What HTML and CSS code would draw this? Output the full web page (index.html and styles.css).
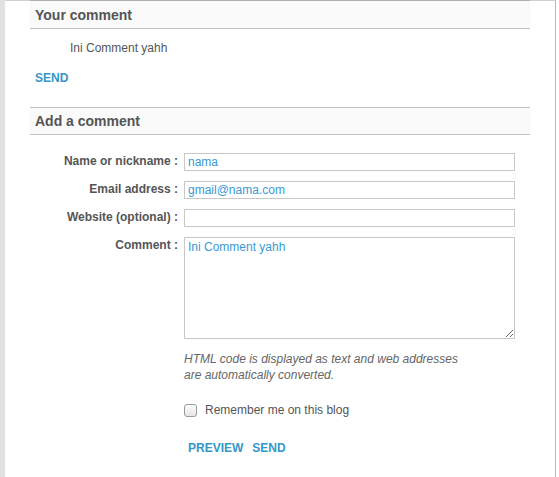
FILE: index.html
```html
<!DOCTYPE html>
<html>
<head>
<meta charset="utf-8">
<link rel="stylesheet" href="styles.css">
</head>
<body>
<div class="page">
  <div class="strip"></div>
  <div class="main">
    <div class="section-head first">Your comment</div>
    <p class="preview-text">Ini Comment yahh</p>
    <div class="actions single"><a class="link">SEND</a></div>

    <div class="section-head">Add a comment</div>
    <form class="form">
      <div class="row">
        <label class="label">Name or nickname :</label>
        <input class="field" type="text" value="nama">
      </div>
      <div class="row">
        <label class="label">Email address :</label>
        <input class="field" type="text" value="gmail@nama.com">
      </div>
      <div class="row">
        <label class="label">Website (optional) :</label>
        <input class="field" type="text" value="">
      </div>
      <div class="row">
        <label class="label">Comment :</label>
        <textarea class="field area">Ini Comment yahh</textarea>
      </div>
      <div class="row">
        <span class="label"></span>
        <div class="col">
          <p class="help">HTML code is displayed as text and web addresses<br>are automatically converted.</p>
          <label class="remember"><span class="check"></span>Remember me on this blog</label>
          <div class="actions"><a class="link">PREVIEW</a><a class="link">SEND</a></div>
        </div>
      </div>
    </form>
  </div>
</div>
</body>
</html>
```

FILE: styles.css
```css
html, body {
  margin: 0;
  padding: 0;
  background: #fff;
}
body {
  font-family: "Liberation Sans", Arial, sans-serif;
  font-size: 12px;
  color: #555;
}
.page {
  display: flex;
  height: 477px;
}
.strip {
  width: 5px;
  background: #e1e1e1;
  flex: none;
}
.main {
  width: 500px;
  padding: 0 25px;
  border-top: 1px solid #cfcfcf;
  border-right: 1px solid #b8b8b8;
}
.section-head {
  height: 26px;
  line-height: 26px;
  padding-left: 5px;
  background: #fafafa;
  border-top: 1px solid #c4c4c4;
  border-bottom: 1px solid #c4c4c4;
  font-weight: bold;
  font-size: 14px;
  color: #555;
}
.section-head.first {
  height: 27px;
  line-height: 28px;
  margin-top: -1px;
  border-top: 1px solid #b0b0b0;
}
.preview-text {
  margin: 12px 0 0 40px;
  line-height: 14px;
  color: #555;
}
.actions {
  display: flex;
  gap: 9px;
}
.actions.single {
  margin: 16px 0 22px 5px;
}
.link {
  font-weight: bold;
  color: #3597c8;
  text-decoration: none;
  line-height: 14px;
}
.form {
  margin: 18px 0 0;
  display: flex;
  flex-direction: column;
  gap: 10px;
}
.row {
  display: flex;
  align-items: flex-start;
}
.label {
  width: 148px;
  flex: none;
  text-align: right;
  font-weight: bold;
  color: #555;
  padding-top: 1px;
  margin-right: 6px;
  line-height: 14px;
}
.field {
  box-sizing: border-box;
  width: 331px;
  height: 18px;
  margin: 0;
  padding: 0 3px;
  border: 1px solid #c8c8c8;
  font-family: "Liberation Sans", Arial, sans-serif;
  font-size: 12px;
  color: #3a9ad2;
  background: #fff;
  outline: none;
}
.area {
  height: 102px;
  padding: 2px 3px;
  resize: both;
}
.col {
  display: flex;
  flex-direction: column;
}
.help {
  margin: 2px 0 0;
  font-style: italic;
  line-height: 16px;
  color: #666;
}
.remember {
  display: flex;
  align-items: center;
  margin-top: 20px;
  color: #555;
  line-height: 14px;
}
.check {
  width: 11px;
  height: 11px;
  border: 1px solid #9a9a9a;
  border-radius: 3px;
  background: linear-gradient(#fdfdfd, #e6e6e6);
  margin-right: 8px;
}
.col .actions {
  margin: 24px 0 0 4px;
}
```
